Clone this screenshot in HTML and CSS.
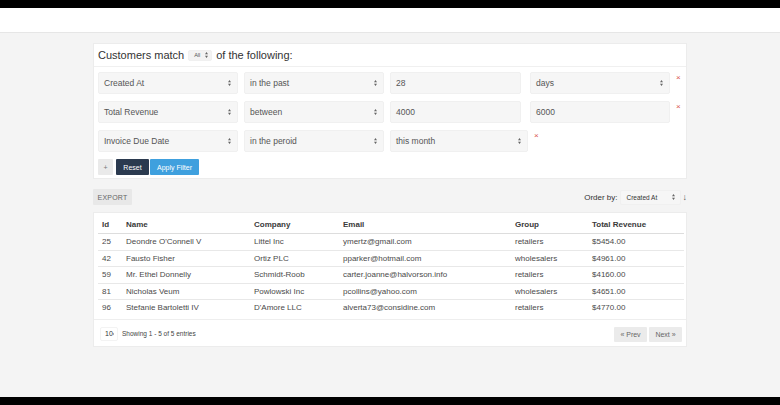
FILE: index.html
```html
<!DOCTYPE html>
<html lang="en">
<head>
    <meta charset="UTF-8">
    <title>Customers</title>
    <link rel="stylesheet" href="styles.css">
</head>
<body>
    <div class="topbar"></div>
    <div class="header"></div>

    <div class="main">
        <div class="card filter">
            <div class="filter-title">
                <span>Customers match</span>
                <span class="select tiny">All <svg class="caret" viewBox="0 0 4 8"><path d="M0 3L2 0L4 3ZM0 5L2 8L4 5Z"/></svg></span>
                <span>of the following:</span>
            </div>

            <div class="rule">
                <div class="select w140">Created At <svg class="caret" viewBox="0 0 4 8"><path d="M0 3L2 0L4 3ZM0 5L2 8L4 5Z"/></svg></div>
                <div class="select w140">in the past <svg class="caret" viewBox="0 0 4 8"><path d="M0 3L2 0L4 3ZM0 5L2 8L4 5Z"/></svg></div>
                <div class="input w131">28</div>
                <div class="select w140 gap9">days <svg class="caret" viewBox="0 0 4 8"><path d="M0 3L2 0L4 3ZM0 5L2 8L4 5Z"/></svg></div>
                <span class="remove">×</span>
            </div>
            <div class="rule">
                <div class="select w140">Total Revenue <svg class="caret" viewBox="0 0 4 8"><path d="M0 3L2 0L4 3ZM0 5L2 8L4 5Z"/></svg></div>
                <div class="select w140">between <svg class="caret" viewBox="0 0 4 8"><path d="M0 3L2 0L4 3ZM0 5L2 8L4 5Z"/></svg></div>
                <div class="input w131">4000</div>
                <div class="input w140 gap9">6000</div>
                <span class="remove">×</span>
            </div>
            <div class="rule">
                <div class="select w140">Invoice Due Date <svg class="caret" viewBox="0 0 4 8"><path d="M0 3L2 0L4 3ZM0 5L2 8L4 5Z"/></svg></div>
                <div class="select w140">in the peroid <svg class="caret" viewBox="0 0 4 8"><path d="M0 3L2 0L4 3ZM0 5L2 8L4 5Z"/></svg></div>
                <div class="select w138">this month <svg class="caret" viewBox="0 0 4 8"><path d="M0 3L2 0L4 3ZM0 5L2 8L4 5Z"/></svg></div>
                <span class="remove">×</span>
            </div>

            <div class="actions">
                <button class="btn btn-light">+</button>
                <button class="btn btn-dark">Reset</button>
                <button class="btn btn-blue">Apply Filter</button>
            </div>
        </div>

        <div class="toolbar">
            <button class="btn btn-export">EXPORT</button>
            <div class="order">
                <span>Order by:</span>
                <span class="select small">Created At <svg class="caret" viewBox="0 0 4 8"><path d="M0 3L2 0L4 3ZM0 5L2 8L4 5Z"/></svg></span>
                <span class="arrow">↓</span>
            </div>
        </div>

        <div class="card list">
            <table>
                <thead>
                    <tr>
                        <th class="c-id">Id</th>
                        <th class="c-name">Name</th>
                        <th class="c-company">Company</th>
                        <th class="c-email">Email</th>
                        <th class="c-group">Group</th>
                        <th>Total Revenue</th>
                    </tr>
                </thead>
                <tbody>
                    <tr><td>25</td><td>Deondre O'Connell V</td><td>Littel Inc</td><td>ymertz@gmail.com</td><td>retailers</td><td>$5454.00</td></tr>
                    <tr><td>42</td><td>Fausto Fisher</td><td>Ortiz PLC</td><td>pparker@hotmail.com</td><td>wholesalers</td><td>$4961.00</td></tr>
                    <tr><td>59</td><td>Mr. Ethel Donnelly</td><td>Schmidt-Roob</td><td>carter.joanne@halvorson.info</td><td>retailers</td><td>$4160.00</td></tr>
                    <tr><td>81</td><td>Nicholas Veum</td><td>Powlowski Inc</td><td>pcollins@yahoo.com</td><td>wholesalers</td><td>$4651.00</td></tr>
                    <tr><td>96</td><td>Stefanie Bartoletti IV</td><td>D'Amore LLC</td><td>alverta73@considine.com</td><td>retailers</td><td>$4770.00</td></tr>
                </tbody>
            </table>
            <div class="list-footer">
                <div class="per-page">
                    <span class="select mini">10 <svg class="caret" viewBox="0 0 4 8"><path d="M0 3L2 0L4 3ZM0 5L2 8L4 5Z"/></svg></span>
                    <span>Showing 1 - 5 of 5 entries</span>
                </div>
                <div class="pager">
                    <button class="btn btn-page">« Prev</button>
                    <button class="btn btn-page">Next »</button>
                </div>
            </div>
        </div>
    </div>

    <div class="bottombar"></div>
</body>
</html>
```

FILE: styles.css
```css
html, body {
    margin: 0;
    height: 100%;
}

body {
    background: #f4f4f4;
    font-family: "Liberation Sans", Arial, sans-serif;
    color: #333;
    position: relative;
    overflow: hidden;
}

.topbar {
    height: 8px;
    background: #000;
}

.header {
    height: 24px;
    background: #fff;
    border-bottom: 1px solid #e6e6e6;
}

.main {
    width: 594px;
    margin: 10px auto 0;
}

.card {
    background: #fff;
    border: 1px solid #ececec;
    box-sizing: border-box;
}

.filter {
    height: 136px;
}

.filter-title {
    height: 22px;
    display: flex;
    align-items: center;
    padding-left: 4px;
    font-size: 11px;
    color: #333;
    border-bottom: 1px solid #f0f0f0;
}

.rule {
    display: flex;
    align-items: flex-start;
    gap: 6px;
    margin: 5px 0 0 4px;
    height: 24px;
}

.select,
.input {
    box-sizing: border-box;
    height: 22px;
    background: #f6f6f6;
    border: 1px solid #f0f0f0;
    border-radius: 2px;
    display: flex;
    align-items: center;
    justify-content: space-between;
    padding: 0 6px 0 5px;
    font-size: 8.5px;
    color: #555;
}

.caret {
    width: 3px;
    height: 6px;
    fill: #666;
}

.w140 { width: 140px; }
.w138 { width: 138px; }
.w131 { width: 131px; }
.gap9 { margin-left: 3px; }

.remove {
    color: #d9534f;
    font-size: 8px;
    line-height: 8px;
    margin-top: 2px;
}

.actions {
    display: flex;
    gap: 3px;
    margin: 5px 0 0 4px;
}

.btn {
    border: none;
    font-family: "Liberation Sans", Arial, sans-serif;
    font-size: 7px;
    height: 16px;
    padding: 0 6px;
    border-radius: 1px;
}

.btn-light {
    width: 15px;
    background: #eaeaea;
    color: #777;
    padding: 0;
}

.btn-dark {
    width: 33px;
    background: #2b3a4f;
    color: #fff;
    padding: 0;
}

.btn-blue {
    width: 49px;
    margin-left: -2px;
    background: #3fa0de;
    color: #fff;
    padding: 0;
}

.toolbar {
    display: flex;
    justify-content: space-between;
    align-items: center;
    margin-top: 9px;
    height: 18px;
}

.btn-export {
    width: 39px;
    background: #e8e8e8;
    color: #666;
    padding: 0;
    letter-spacing: 0.2px;
}

.order {
    display: flex;
    align-items: center;
    gap: 2px;
    font-size: 8px;
    color: #333;
}

.select.small {
    width: 61px;
    height: 15px;
    font-size: 6.5px;
    color: #333;
    padding: 0 5px 0 6px;
}

.select.tiny {
    width: 24px;
    height: 11px;
    font-size: 5.5px;
    padding: 0 3px 0 5px;
    margin: 0 4px 0 4px;
    background: #f3f3f3;
}

.select.mini {
    width: 18px;
    height: 14px;
    font-size: 7px;
    color: #333;
    padding: 0 3px 0 4px;
    background: #fff;
    border-color: #f3f3f3;
}

.arrow {
    font-size: 9px;
    color: #555;
}

.list {
    margin-top: 6px;
    padding: 3px 4px 0;
}

table {
    width: 586px;
    border-collapse: collapse;
    font-size: 8px;
    color: #4a4a4a;
}

th {
    text-align: left;
    font-weight: bold;
    font-size: 8px;
    color: #3a3a3a;
    height: 17px;
    padding: 0 0 0 4px;
    border-bottom: 1px solid #ddd;
}

td {
    height: 15.5px;
    padding: 0 0 0 4px;
    border-bottom: 1px solid #e8e8e8;
}

tbody tr:last-child td {
    border-bottom: none;
}

.c-id { width: 20px; }
.c-name { width: 124px; }
.c-company { width: 85px; }
.c-email { width: 168px; }
.c-group { width: 73px; }

.list-footer {
    display: flex;
    justify-content: space-between;
    align-items: flex-start;
    box-sizing: border-box;
    height: 27px;
    margin: 3px -4px 0;
    padding: 7px 4px 0 6px;
    border-top: 1px solid #eee;
}

.per-page {
    display: flex;
    align-items: center;
    gap: 4px;
    font-size: 6.5px;
    color: #444;
}

.pager {
    display: flex;
    gap: 2px;
}

.btn-page {
    background: #ebebeb;
    color: #666;
    height: 15px;
    width: 33px;
    padding: 0;
    font-size: 7px;
}

.bottombar {
    position: absolute;
    left: 0;
    right: 0;
    bottom: 0;
    height: 8px;
    background: #000;
}
```
